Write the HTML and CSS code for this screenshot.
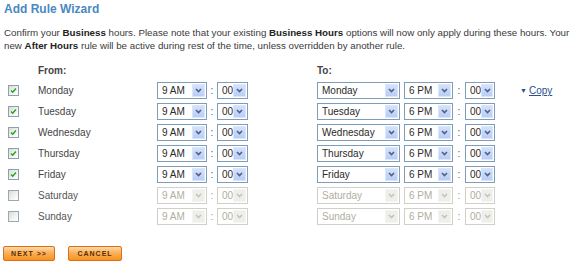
FILE: index.html
```html
<!DOCTYPE html>
<html>
<head>
<meta charset="utf-8">
<link rel="stylesheet" href="styles.css">
</head>
<body>
<div class="page">
  <h1 class="title">Add Rule Wizard</h1>
  <p class="intro">Confirm your <b>Business</b> hours. Please note that your existing <b>Business Hours</b> options will now only apply during these hours. Your new <b>After Hours</b> rule will be active during rest of the time, unless overridden by another rule.</p>

  <div class="grid">
    <div class="row head">
      <span></span><span class="lbl">From:</span><span class="to-lbl">To:</span>
    </div>

    <div class="row">
      <span class="cb checked"><svg viewBox="0 0 11 11"><path d="M2.5 5.5 L4.5 7.5 L8.5 3" /></svg></span>
      <span class="day">Monday</span>
      <span class="sel"><span class="v">9 AM</span><span class="btn"><svg viewBox="0 0 9 9"><path d="M2 3 L4.5 5.5 L7 3"/></svg></span></span>
      <span class="colon">:</span>
      <span class="sel"><span class="v">00</span><span class="btn"><svg viewBox="0 0 9 9"><path d="M2 3 L4.5 5.5 L7 3"/></svg></span></span>
      <span></span>
      <span class="sel"><span class="v">Monday</span><span class="btn"><svg viewBox="0 0 9 9"><path d="M2 3 L4.5 5.5 L7 3"/></svg></span></span>
      <span></span>
      <span class="sel"><span class="v">6 PM</span><span class="btn"><svg viewBox="0 0 9 9"><path d="M2 3 L4.5 5.5 L7 3"/></svg></span></span>
      <span class="colon">:</span>
      <span class="sel"><span class="v">00</span><span class="btn"><svg viewBox="0 0 9 9"><path d="M2 3 L4.5 5.5 L7 3"/></svg></span></span>
      <span></span>
      <span class="copy"><span class="tri">&#9660;</span><a href="#">Copy</a></span>
    </div>

    <div class="row">
      <span class="cb checked"><svg viewBox="0 0 11 11"><path d="M2.5 5.5 L4.5 7.5 L8.5 3" /></svg></span>
      <span class="day">Tuesday</span>
      <span class="sel"><span class="v">9 AM</span><span class="btn"><svg viewBox="0 0 9 9"><path d="M2 3 L4.5 5.5 L7 3"/></svg></span></span>
      <span class="colon">:</span>
      <span class="sel"><span class="v">00</span><span class="btn"><svg viewBox="0 0 9 9"><path d="M2 3 L4.5 5.5 L7 3"/></svg></span></span>
      <span></span>
      <span class="sel"><span class="v">Tuesday</span><span class="btn"><svg viewBox="0 0 9 9"><path d="M2 3 L4.5 5.5 L7 3"/></svg></span></span>
      <span></span>
      <span class="sel"><span class="v">6 PM</span><span class="btn"><svg viewBox="0 0 9 9"><path d="M2 3 L4.5 5.5 L7 3"/></svg></span></span>
      <span class="colon">:</span>
      <span class="sel"><span class="v">00</span><span class="btn"><svg viewBox="0 0 9 9"><path d="M2 3 L4.5 5.5 L7 3"/></svg></span></span>
    </div>

    <div class="row">
      <span class="cb checked"><svg viewBox="0 0 11 11"><path d="M2.5 5.5 L4.5 7.5 L8.5 3" /></svg></span>
      <span class="day">Wednesday</span>
      <span class="sel"><span class="v">9 AM</span><span class="btn"><svg viewBox="0 0 9 9"><path d="M2 3 L4.5 5.5 L7 3"/></svg></span></span>
      <span class="colon">:</span>
      <span class="sel"><span class="v">00</span><span class="btn"><svg viewBox="0 0 9 9"><path d="M2 3 L4.5 5.5 L7 3"/></svg></span></span>
      <span></span>
      <span class="sel"><span class="v">Wednesday</span><span class="btn"><svg viewBox="0 0 9 9"><path d="M2 3 L4.5 5.5 L7 3"/></svg></span></span>
      <span></span>
      <span class="sel"><span class="v">6 PM</span><span class="btn"><svg viewBox="0 0 9 9"><path d="M2 3 L4.5 5.5 L7 3"/></svg></span></span>
      <span class="colon">:</span>
      <span class="sel"><span class="v">00</span><span class="btn"><svg viewBox="0 0 9 9"><path d="M2 3 L4.5 5.5 L7 3"/></svg></span></span>
    </div>

    <div class="row">
      <span class="cb checked"><svg viewBox="0 0 11 11"><path d="M2.5 5.5 L4.5 7.5 L8.5 3" /></svg></span>
      <span class="day">Thursday</span>
      <span class="sel"><span class="v">9 AM</span><span class="btn"><svg viewBox="0 0 9 9"><path d="M2 3 L4.5 5.5 L7 3"/></svg></span></span>
      <span class="colon">:</span>
      <span class="sel"><span class="v">00</span><span class="btn"><svg viewBox="0 0 9 9"><path d="M2 3 L4.5 5.5 L7 3"/></svg></span></span>
      <span></span>
      <span class="sel"><span class="v">Thursday</span><span class="btn"><svg viewBox="0 0 9 9"><path d="M2 3 L4.5 5.5 L7 3"/></svg></span></span>
      <span></span>
      <span class="sel"><span class="v">6 PM</span><span class="btn"><svg viewBox="0 0 9 9"><path d="M2 3 L4.5 5.5 L7 3"/></svg></span></span>
      <span class="colon">:</span>
      <span class="sel"><span class="v">00</span><span class="btn"><svg viewBox="0 0 9 9"><path d="M2 3 L4.5 5.5 L7 3"/></svg></span></span>
    </div>

    <div class="row">
      <span class="cb checked"><svg viewBox="0 0 11 11"><path d="M2.5 5.5 L4.5 7.5 L8.5 3" /></svg></span>
      <span class="day">Friday</span>
      <span class="sel"><span class="v">9 AM</span><span class="btn"><svg viewBox="0 0 9 9"><path d="M2 3 L4.5 5.5 L7 3"/></svg></span></span>
      <span class="colon">:</span>
      <span class="sel"><span class="v">00</span><span class="btn"><svg viewBox="0 0 9 9"><path d="M2 3 L4.5 5.5 L7 3"/></svg></span></span>
      <span></span>
      <span class="sel"><span class="v">Friday</span><span class="btn"><svg viewBox="0 0 9 9"><path d="M2 3 L4.5 5.5 L7 3"/></svg></span></span>
      <span></span>
      <span class="sel"><span class="v">6 PM</span><span class="btn"><svg viewBox="0 0 9 9"><path d="M2 3 L4.5 5.5 L7 3"/></svg></span></span>
      <span class="colon">:</span>
      <span class="sel"><span class="v">00</span><span class="btn"><svg viewBox="0 0 9 9"><path d="M2 3 L4.5 5.5 L7 3"/></svg></span></span>
    </div>

    <div class="row off">
      <span class="cb"></span>
      <span class="day">Saturday</span>
      <span class="sel"><span class="v">9 AM</span><span class="btn"><svg viewBox="0 0 9 9"><path d="M2 3 L4.5 5.5 L7 3"/></svg></span></span>
      <span class="colon">:</span>
      <span class="sel"><span class="v">00</span><span class="btn"><svg viewBox="0 0 9 9"><path d="M2 3 L4.5 5.5 L7 3"/></svg></span></span>
      <span></span>
      <span class="sel"><span class="v">Saturday</span><span class="btn"><svg viewBox="0 0 9 9"><path d="M2 3 L4.5 5.5 L7 3"/></svg></span></span>
      <span></span>
      <span class="sel"><span class="v">6 PM</span><span class="btn"><svg viewBox="0 0 9 9"><path d="M2 3 L4.5 5.5 L7 3"/></svg></span></span>
      <span class="colon">:</span>
      <span class="sel"><span class="v">00</span><span class="btn"><svg viewBox="0 0 9 9"><path d="M2 3 L4.5 5.5 L7 3"/></svg></span></span>
    </div>

    <div class="row off">
      <span class="cb"></span>
      <span class="day">Sunday</span>
      <span class="sel"><span class="v">9 AM</span><span class="btn"><svg viewBox="0 0 9 9"><path d="M2 3 L4.5 5.5 L7 3"/></svg></span></span>
      <span class="colon">:</span>
      <span class="sel"><span class="v">00</span><span class="btn"><svg viewBox="0 0 9 9"><path d="M2 3 L4.5 5.5 L7 3"/></svg></span></span>
      <span></span>
      <span class="sel"><span class="v">Sunday</span><span class="btn"><svg viewBox="0 0 9 9"><path d="M2 3 L4.5 5.5 L7 3"/></svg></span></span>
      <span></span>
      <span class="sel"><span class="v">6 PM</span><span class="btn"><svg viewBox="0 0 9 9"><path d="M2 3 L4.5 5.5 L7 3"/></svg></span></span>
      <span class="colon">:</span>
      <span class="sel"><span class="v">00</span><span class="btn"><svg viewBox="0 0 9 9"><path d="M2 3 L4.5 5.5 L7 3"/></svg></span></span>
    </div>
  </div>

  <div class="actions">
    <span class="obtn next">NEXT &gt;&gt;</span>
    <span class="obtn cancel">CANCEL</span>
  </div>
</div>
</body>
</html>
```
FILE: styles.css
```css
html, body {
  margin: 0;
  padding: 0;
  background: #ffffff;
}
.page {
  font-family: "Liberation Sans", Arial, sans-serif;
  font-size: 10px;
  color: #3a3a3a;
  padding: 0 0 0 4px;
}
.title {
  margin: 0;
  font-size: 12px;
  line-height: 18px;
  font-weight: bold;
  color: #4a88c2;
}
.intro {
  margin: 8px 0 0 0;
  font-size: 9.75px;
  line-height: 13px;
  width: 570px;
}
.intro b {
  color: #222;
}
.grid {
  margin-top: 9px;
  margin-left: -4px;
}
.row {
  display: grid;
  grid-template-columns: 38px 119px 50px 10px 31px 69px 83px 4px 49px 12px 30px 25px auto;
  align-items: center;
  height: 21px;
}
.row.head {
  height: 19px;
}
.lbl, .to-lbl {
  font-weight: bold;
  color: #444;
}
.to-lbl {
  grid-column: 7 / span 4;
}
.cb {
  margin-left: 8px;
  width: 11px;
  height: 11px;
  box-sizing: border-box;
  border: 1px solid #8ba0b4;
  background: linear-gradient(135deg, #dcdcd6 0%, #f4f4f0 60%, #ffffff 100%);
  display: flex;
}
.cb svg {
  width: 9px;
  height: 9px;
}
.cb svg path {
  fill: none;
  stroke: #22a022;
  stroke-width: 1.7;
}
.day {
  color: #444;
}
.sel {
  height: 17px;
  box-sizing: border-box;
  border: 1px solid #7f9db9;
  background: #fff;
  display: flex;
  align-items: center;
  justify-content: space-between;
  padding: 0 1px 0 4px;
  color: #2a2a2a;
}
.sel .v {
  white-space: nowrap;
}
.btn {
  width: 13px;
  height: 13px;
  box-sizing: border-box;
  border: 1px solid #dbe6fb;
  background: linear-gradient(#d4e1fb, #b9cdf5);
  display: flex;
  align-items: center;
  justify-content: center;
}
.btn svg {
  width: 9px;
  height: 9px;
}
.btn svg path {
  fill: none;
  stroke: #4d6185;
  stroke-width: 1.6;
}
.colon {
  text-align: center;
  color: #555;
}
.off .day {
  color: #555;
}
.off .cb {
  border-color: #9aa8b6;
}
.off .sel {
  border-color: #d2d0c6;
  color: #b0aea2;
}
.off .btn {
  border-color: #f4f4f2;
  background: #eeeeea;
}
.off .btn svg path {
  stroke: #c4c4bc;
}
.off .colon {
  color: #999;
}
.copy {
  display: flex;
  align-items: center;
  gap: 2px;
  font-size: 10px;
}
.copy .tri {
  font-size: 7px;
  color: #2b4f8f;
}
.copy a {
  color: #2b4f8f;
  text-decoration: underline;
}
.actions {
  margin-top: 19px;
  margin-left: -1px;
  display: flex;
  gap: 13px;
}
.obtn {
  width: 52px;
  height: 15px;
  box-sizing: border-box;
  border: 1px solid #d8701a;
  border-radius: 2px;
  background: linear-gradient(#ffd9a8 0%, #fbb05a 45%, #f7931e 100%);
  color: #5a2e08;
  font-size: 7px;
  font-weight: bold;
  letter-spacing: 1px;
  display: flex;
  align-items: center;
  justify-content: center;
}
.obtn.cancel {
  width: 54px;
}
```
